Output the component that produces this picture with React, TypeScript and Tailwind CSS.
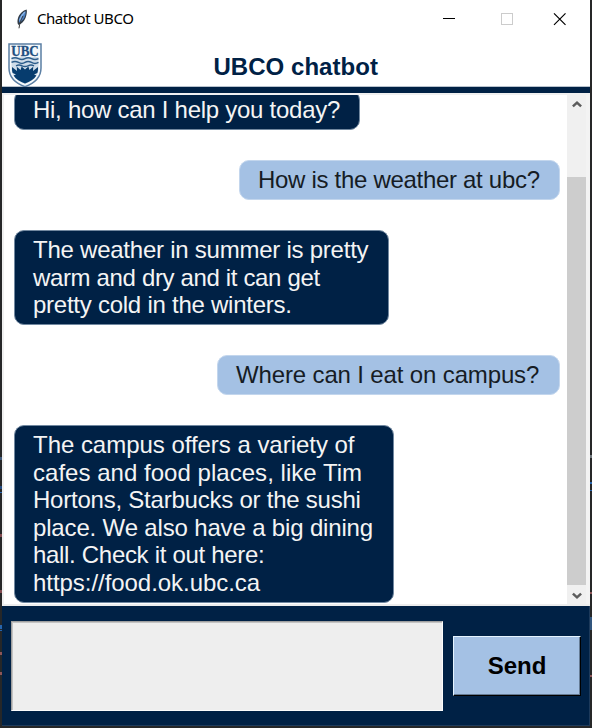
import React from "react";

type Line = { text: string; tracking: string };

function Bubble({ lines, mine, className }: { lines: Line[]; mine?: boolean; className: string }) {
  return (
    <div
      className={`shrink-0 rounded-[10px] border pl-[18px] pt-[5px] text-[24px] leading-[27.5px] ${
        mine ? "self-end border-[#c3d6ed] bg-[#a4c1e4] text-[#161c24]" : "self-start border-[#7188a0] bg-[#002145] text-[#f4f4f4]"
      } ${className}`}
    >
      {lines.map((l) => (
        <div key={l.text} className={`whitespace-nowrap ${l.tracking}`}>
          {l.text}
        </div>
      ))}
    </div>
  );
}

function Feather() {
  return (
    <svg width="12" height="20" viewBox="0 0 12 20" className="block">
      <path d="M10.6 .6 C7.2 1.3 3.2 5 2 9 C1.2 12 1.3 14 2.2 15.8 L3.8 15.6 C7.4 13.5 9.6 10 10.4 6 C10.9 4 11.1 2 10.6 .6Z" fill="#303b48" />
      <path d="M9.8 2 C6.8 3.5 4 6.5 3 10 L3 13.8 C6.4 12.3 8.6 9 9.4 5.8Z" fill="#4a80c4" />
      <path d="M8.8 3 C6.3 5.2 4.6 8.2 3.6 11.5" fill="none" stroke="#8db7e8" strokeWidth="1.3" />
      <path d="M7 7 C5 10.5 3.6 14 3 19.3" fill="none" stroke="#3a3a3a" strokeWidth="1" />
    </svg>
  );
}

function Crest() {
  return (
    <svg width="34" height="45" viewBox="0 0 34 45" className="block">
      <path d="M1 1 H33 V25 C33 34.5 27 40 17 43.7 C7 40 1 34.5 1 25Z" fill="#f4f8fb" stroke="#5b7fa4" strokeWidth="1.5" />
      <path d="M3.5 14 H30.5 V25 C30.5 32 26 37.5 17 41 C8 37.5 3.5 32 3.5 25Z" fill="#cfdde9" />
      <text x="17" y="12.8" textAnchor="middle" textLength="27.5" lengthAdjust="spacingAndGlyphs" fill="#1f4f80" stroke="#1f4f80" strokeWidth=".3" fontFamily="Liberation Serif, serif" fontWeight="700" fontSize="15">UBC</text>
      <path d="M3.5 15.7 Q7 14 10.5 15.7 T17 15.7 T23.5 15.7 T30.5 15.7 M3.5 19.4 Q7 17.4 10.5 19.4 T17 19.4 T23.5 19.4 T30.5 19.4 M8 22.8 Q11 21.3 14 22.8 T20 22.8 T26 22.8" fill="none" stroke="#2c5d8b" strokeWidth="1.5" />
      <path d="M4 24 L9 28 L8.8 23.8 L12.6 27 L13.6 23.4 L17 26.5 L20.4 23.4 L21.4 27 L25.2 23.8 L25 28 L30 24 C30 27 30 28 29.3 30 L26 31.5 L28.4 32.5 C26 36.5 22 38.5 17 40.6 C12 38.5 8 36.5 5.6 32.5 L8 31.5 L4.7 30 C4 28 4 27 4 24Z" fill="#063c6e" />
    </svg>
  );
}

function Arrow({ down }: { down?: boolean }) {
  return (
    <svg width="10" height="8" viewBox="0 0 10 8" className={`block ${down ? "rotate-180" : ""}`}>
      <path d="M.9 6.4 L5 2.6 L9.1 6.4" fill="none" stroke="#5c5c5c" strokeWidth="2.5" />
    </svg>
  );
}

/* Sliver of the editor visible beside the window. */
function DesktopEdge({ marks }: { marks: [number, number, string][] }) {
  return (
    <svg width="2" height="728" viewBox="0 0 2 728" className="block shrink-0">
      <rect width="2" height="728" fill="#262728" />
      {marks.map(([y, h, color]) => (
        <rect key={y} y={y} width="2" height={h} fill={color} />
      ))}
    </svg>
  );
}

export default function App() {
  return (
    <div className="flex h-[728px] w-[592px] overflow-hidden bg-[#262728] font-['Liberation_Sans',Arial,sans-serif]">
      <DesktopEdge marks={[[457, 3, "#40597a"], [486, 3, "#234a80"], [492, 1, "#2a68b4"], [534, 3, "#824b50"], [590, 3, "#824b50"], [625, 4, "#2765ad"], [630, 1, "#2765ad"], [652, 3, "#8d5557"], [672, 3, "#8d5557"]]} />
      <div className="mb-[2px] flex min-w-0 flex-1 flex-col bg-white">
        <div className="flex h-[37px] shrink-0 items-center pl-[14px]">
          <Feather />
          <span className="ml-[9px] whitespace-nowrap font-['Noto_Sans',sans-serif] text-[15px] tracking-[-0.45px] text-black">Chatbot UBCO</span>
          <svg width="123" height="14" viewBox="0 0 123 14" className="ml-auto mr-[24px] block" fill="none">
            <path d="M0 6.5 H12" stroke="#000" shapeRendering="crispEdges" />
            <rect x="58.5" y="1.5" width="11" height="11" stroke="#ccc" shapeRendering="crispEdges" />
            <path d="M111 1.3 L122.5 12.8 M122.5 1.3 L111 12.8" stroke="#000" strokeWidth="1.2" />
          </svg>
        </div>
        <div className="flex h-[50px] shrink-0 border-b border-[#b8c2cd] pl-[6px] pt-[6px]">
          <Crest />
          <h1 className="ml-[171.5px] mt-[10px] whitespace-nowrap text-[24px] font-bold leading-[28px] tracking-[0.04px] text-[#002145]">UBCO chatbot</h1>
        </div>
        <div className="h-[6px] shrink-0 bg-[#002145]" />
        <div className="flex h-[513px] shrink-0 border-b-2 border-l-2 border-t-2 border-[#f0f0f0] border-b-[#ededed]">
          <div className="flex h-full flex-1 flex-col overflow-hidden pl-[10px] pr-[7px]">
            <Bubble className="mt-[-5px] h-[40px] w-[346px]" lines={[{ text: "Hi, how can I help you today?", tracking: "tracking-[-0.27px]" }]} />
            <Bubble mine className="mt-[30px] h-[40px] w-[321px]" lines={[{ text: "How is the weather at ubc?", tracking: "tracking-[-0.3px]" }]} />
            <Bubble
              className="mt-[30px] h-[95px] w-[375px]"
              lines={[
                { text: "The weather in summer is pretty", tracking: "tracking-[-0.24px]" },
                { text: "warm and dry and it can get", tracking: "tracking-[-0.35px]" },
                { text: "pretty cold in the winters.", tracking: "tracking-[-0.25px]" },
              ]}
            />
            <Bubble mine className="mt-[30px] h-[40px] w-[343px]" lines={[{ text: "Where can I eat on campus?", tracking: "tracking-[-0.14px]" }]} />
            <Bubble
              className="mt-[30px] h-[178px] w-[380px]"
              lines={[
                { text: "The campus offers a variety of", tracking: "tracking-[-0.03px]" },
                { text: "cafes and food places, like Tim", tracking: "tracking-[0.03px]" },
                { text: "Hortons, Starbucks or the sushi", tracking: "tracking-[-0.23px]" },
                { text: "place. We also have a big dining", tracking: "tracking-[-0.16px]" },
                { text: "hall. Check it out here:", tracking: "tracking-[-0.31px]" },
                { text: "https://food.ok.ubc.ca", tracking: "tracking-[-0.05px]" },
              ]}
            />
          </div>
          <div className="flex w-[23px] flex-col items-center border-r-4 border-[#f3f3f3] bg-[#f0f0f0]">
            <div className="flex h-[17px] items-center pt-[1px]"><Arrow /></div>
            <div className="mt-[65px] h-[408px] w-full bg-[#cdcdcd]" />
            <div className="flex h-[19px] items-center pt-[2px]"><Arrow down /></div>
          </div>
        </div>
        <div className="flex min-h-0 flex-1 border-b border-r border-[#1d3a5b] bg-[#002145] pl-[9px] pt-[15px]">
          <div className="h-[90px] w-[432px] border border-b-[#fcfcfc] border-l-[#a0a0a0] border-r-[#fcfcfc] border-t-[#a0a0a0] bg-[#eee] shadow-[inset_1px_1px_0_#c4c4c4]" />
          <button className="ml-[10px] mt-[15px] h-[60px] w-[128px] border border-b-black border-l-[#e5f4ff] border-r-black border-t-[#e5f4ff] bg-[#a4c1e4] text-[24px] font-bold leading-none text-black shadow-[inset_-1px_-1px_0_#657b94]">Send</button>
        </div>
      </div>
      <DesktopEdge marks={[[455, 3, "#70777c"], [482, 2, "#2765ad"], [490, 1, "#2765ad"], [592, 2, "#8d5557"], [617, 13, "#31557d"], [675, 2, "#8d5557"]]} />
    </div>
  );
}
